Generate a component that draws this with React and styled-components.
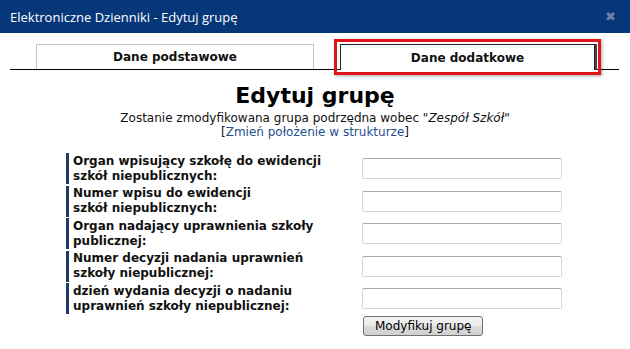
import styled, { createGlobalStyle } from "styled-components";

const GlobalStyle = createGlobalStyle`
  html, body {
    margin: 0;
    padding: 0;
    background: #fff;
  }
  body {
    font-family: "DejaVu Sans", Verdana, sans-serif;
  }
`;

const Dialog = styled.div`
  width: 630px;
  height: 349px;
  overflow: hidden;
  background: #fff;
`;

const TitleBar = styled.div`
  height: 33px;
  background: #063779;
  display: flex;
  align-items: center;
  justify-content: space-between;
  padding: 0 14px 0 10px;
  box-sizing: border-box;
`;

const TitleText = styled.span`
  color: #fff;
  font-family: "Open Sans", sans-serif;
  font-size: 13px;
`;

const CloseBtn = styled.span`
  color: #6d82aa;
  font-family: "DejaVu Sans", sans-serif;
  font-weight: bold;
  font-size: 13px;
`;

const Tabs = styled.div`
  margin: 11px 11px 0 10px;
  height: 25px;
  border-bottom: 1px solid #000;
  display: flex;
  align-items: flex-end;
  padding-left: 26px;
`;

const Tab = styled.div`
  box-sizing: border-box;
  width: ${(p) => p.$width}px;
  margin-right: ${(p) => p.$gap}px;
  display: flex;
  align-items: center;
  justify-content: center;
  font-size: 12px;
  font-weight: bold;
  color: #111;
  background: #fff;
  border: 1px solid ${(p) => (p.$active ? "#222" : "#c4c4c4")};
  border-bottom: none;
  box-shadow: ${(p) => (p.$active ? "2px 0 0 #444" : "none")};
  position: relative;
  margin-bottom: ${(p) => (p.$active ? "-1px" : "0")};
  height: ${(p) => (p.$active ? 26 : 25)}px;
`;

const Highlight = styled.div`
  position: absolute;
  left: -7px;
  top: -6px;
  right: -7px;
  bottom: -5px;
  border: 3px solid #e0151b;
  box-shadow: 1px 1px 3px rgba(0, 0, 0, 0.35);
  pointer-events: none;
`;

const Content = styled.div`
  display: flex;
  flex-direction: column;
  align-items: center;
`;

const Heading = styled.h1`
  margin: 13px 0 0;
  font-size: 22px;
  font-weight: bold;
  color: #000;
  line-height: 26px;
`;

const Info = styled.div`
  margin-top: 2px;
  font-size: 12px;
  color: #111;
  line-height: 14px;
  text-align: center;
`;

const Link = styled.a`
  color: #1f4f8f;
  text-decoration: none;
`;

const Form = styled.div`
  align-self: stretch;
  margin-top: 14px;
  padding-left: 66px;
  display: grid;
  grid-template-columns: 296px 200px;
  row-gap: 1.5px;
`;

const Label = styled.div`
  border-left: 3px solid #1b3c69;
  padding-left: 4px;
  font-size: 12px;
  font-weight: bold;
  color: #111;
  line-height: 15px;
  height: 31px;
  display: flex;
  align-items: center;
`;

const InputCell = styled.div`
  display: flex;
  align-items: center;
`;

const Input = styled.input`
  box-sizing: border-box;
  width: 200px;
  height: 21px;
  border: 1px solid #d6d6d6;
  border-top-color: #a9a9a9;
  border-radius: 2px;
  background: #fff;
  margin: 0;
`;

const Button = styled.button`
  grid-column: 2;
  justify-self: start;
  margin: 0 0 0 1px;
  height: 20px;
  padding: 0 11px;
  font-family: "DejaVu Sans", sans-serif;
  font-size: 12px;
  color: #000;
  border: 1px solid #707070;
  border-radius: 3px;
  background: linear-gradient(#f2f2f2, #ebebeb 50%, #dddddd 51%, #cfcfcf);
`;

const fields = [
  ["Organ wpisujący szkołę do ewidencji", "szkół niepublicznych:"],
  ["Numer wpisu do ewidencji", "szkół niepublicznych:"],
  ["Organ nadający uprawnienia szkoły", "publicznej:"],
  ["Numer decyzji nadania uprawnień", "szkoły niepublicznej:"],
  ["dzień wydania decyzji o nadaniu", "uprawnień szkoły niepublicznej:"],
];

export default function App() {
  return (
    <>
      <GlobalStyle />
      <Dialog>
        <TitleBar>
          <TitleText>Elektroniczne Dzienniki - Edytuj grupę</TitleText>
          <CloseBtn>✖</CloseBtn>
        </TitleBar>
        <Tabs>
          <Tab $width={278} $gap={26}>Dane podstawowe</Tab>
          <Tab $width={255} $gap={0} $active>
            Dane dodatkowe
            <Highlight />
          </Tab>
        </Tabs>
        <Content>
          <Heading>Edytuj grupę</Heading>
          <Info>
            Zostanie zmodyfikowana grupa podrzędna wobec "<i>Zespół Szkół</i>"
            <br />[<Link href="#">Zmień położenie w strukturze</Link>]
          </Info>
          <Form>
            {fields.map(([a, b], i) => (
              <>
                <Label key={"l" + i}>
                  <span>
                    {a}
                    <br />
                    {b}
                  </span>
                </Label>
                <InputCell key={"i" + i}>
                  <Input type="text" />
                </InputCell>
              </>
            ))}
            <Button>Modyfikuj grupę</Button>
          </Form>
        </Content>
      </Dialog>
    </>
  );
}
